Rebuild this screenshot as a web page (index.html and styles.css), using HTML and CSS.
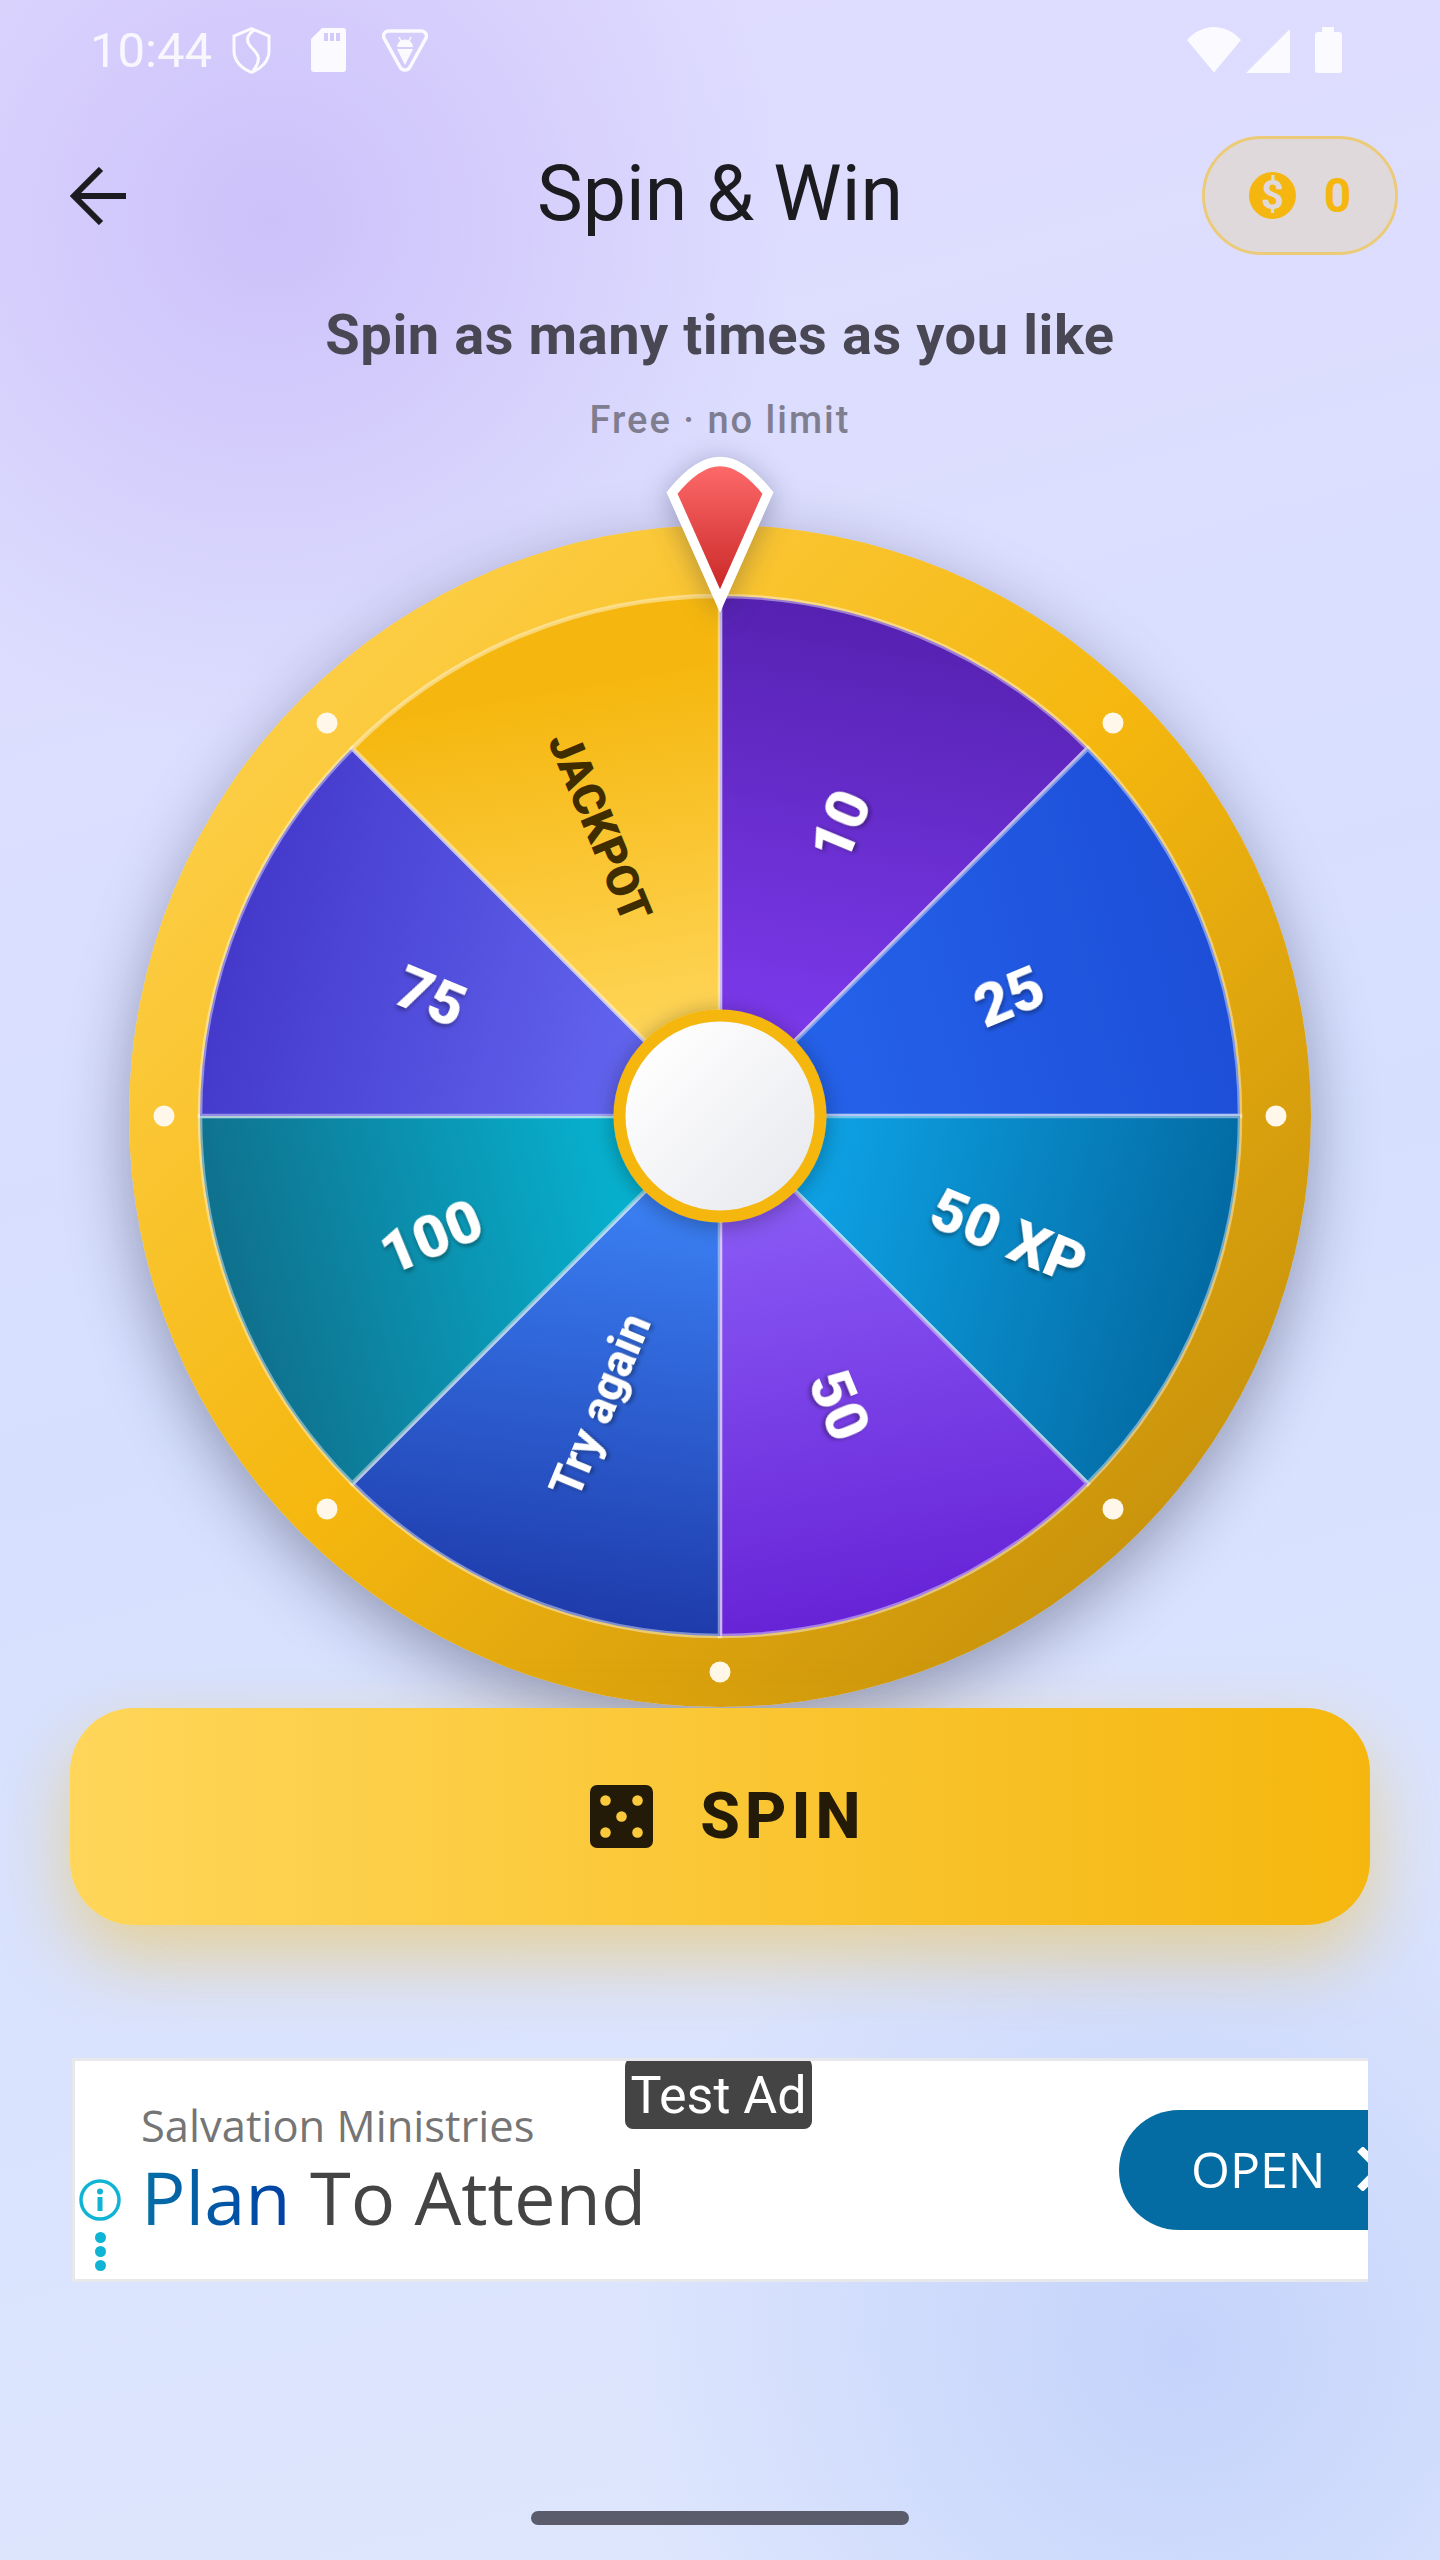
FILE: index.html
```html
<!DOCTYPE html>
<html lang="en">

<head>
  <meta charset="UTF-8">
  <meta name="viewport" content="width=device-width, initial-scale=1.0">
  <title>Spin &amp; Win</title>
  <link rel="stylesheet" href="styles.css">
</head>

<body>
  <div class="screen">

    <div class="status-bar">
      <span class="time">10:44</span>
      <svg class="icon-shield" viewBox="0 0 39 47" fill="none" stroke="currentColor" stroke-width="3">
        <path d="M19.5 1.7L37 9v15c0 10-7.500 17.500-17.500 21.300C9.500 41.500 2 34 2 24V9z" />
        <path d="M22 3c-8 6-8 11-3 17 6 6 12 11 2 24" />
      </svg>
      <svg class="icon-sd" viewBox="0 0 35 44" fill="currentColor">
        <path fill-rule="evenodd"
          d="M11 0h21a3 3 0 0 1 3 3v38a3 3 0 0 1-3 3H3a3 3 0 0 1-3-3V11zM13 5v8h4V5zm6 0v8h4V5zm6 0v8h4V5z" />
      </svg>
      <svg class="icon-tri" viewBox="0 0 46 43">
        <path d="M7 2h32c4 0 6.500 3.500 5 7L28 38c-2 4-8 4-10 0L2 9C.5 5.500 3 2 7 2z" fill="none" stroke="currentColor"
          stroke-width="3.500" />
        <path d="M15 18a8 7.500 0 0 1 16 0zM15 20h16l-8 16z" fill="currentColor" />
        <path d="M17 8l2 4M29 8l-2 4" stroke="currentColor" stroke-width="1.500" />
      </svg>

      <div class="status-right">
        <svg class="icon-wifi" viewBox="0 0 54 46" fill="currentColor">
          <path d="M0 13C7 5 17 0 27 0s20 5 27 13L27 45.500z" />
        </svg>
        <svg class="icon-signal" viewBox="0 0 44 44" fill="currentColor">
          <path d="M44 0v44H0z" />
        </svg>
        <svg class="icon-battery" viewBox="0 0 27 46" fill="currentColor">
          <path d="M7 5V0h12v5h5a3 3 0 0 1 3 3v35a3 3 0 0 1-3 3H3a3 3 0 0 1-3-3V8a3 3 0 0 1 3-3z" />
        </svg>
      </div>
    </div>

    <div class="app-bar">
      <svg class="back-arrow" viewBox="0 0 58 58" fill="none" stroke="currentColor" stroke-width="6">
        <path d="M56 29H5M31 2L4 29l27 27" />
      </svg>
      <h1 class="title">Spin &amp; Win</h1>
      <div class="coin-pill">
        <svg class="coin" viewBox="0 0 47 47">
          <circle cx="23.500" cy="23.500" r="23.500" fill="#f5b70f" />
          <text x="23.500" y="37" text-anchor="middle" class="coin-sign">$</text>
        </svg>
        <span class="coin-count">0</span>
      </div>
    </div>

    <p class="subtitle">Spin as many times as you like</p>
    <p class="note">Free · no limit</p>

    <div class="wheel">
      <svg class="wheel-svg" viewBox="0 0 1182 1182">
        <defs>
          <linearGradient id="rim" gradientUnits="userSpaceOnUse" x1="0" y1="0" x2="1182" y2="1182">
            <stop offset="0" stop-color="#ffd65a" />
            <stop offset="0.5" stop-color="#f5b70f" />
            <stop offset="1" stop-color="#b8860b" />
          </linearGradient>
          <linearGradient id="seg-10" gradientUnits="userSpaceOnUse" x1="591" y1="591" x2="680" y2="71">
            <stop offset="0.15" stop-color="#7c3aed" />
            <stop offset="1" stop-color="#5521b0" />
          </linearGradient>
          <linearGradient id="seg-25" gradientUnits="userSpaceOnUse" x1="591" y1="591" x2="1100" y2="455">
            <stop offset="0.15" stop-color="#2563eb" />
            <stop offset="1" stop-color="#1d4ed8" />
          </linearGradient>
          <linearGradient id="seg-50xp" gradientUnits="userSpaceOnUse" x1="591" y1="591" x2="1100" y2="727">
            <stop offset="0.15" stop-color="#0ea5e9" />
            <stop offset="1" stop-color="#0369a1" />
          </linearGradient>
          <linearGradient id="seg-50" gradientUnits="userSpaceOnUse" x1="591" y1="591" x2="680" y2="1111">
            <stop offset="0.15" stop-color="#8b5cf6" />
            <stop offset="1" stop-color="#6622d6" />
          </linearGradient>
          <linearGradient id="seg-try" gradientUnits="userSpaceOnUse" x1="591" y1="591" x2="520" y2="1111">
            <stop offset="0.15" stop-color="#3b82f6" />
            <stop offset="1" stop-color="#1e3aaa" />
          </linearGradient>
          <linearGradient id="seg-100" gradientUnits="userSpaceOnUse" x1="591" y1="591" x2="82" y2="727">
            <stop offset="0.15" stop-color="#06b6d4" />
            <stop offset="1" stop-color="#0f6f8c" />
          </linearGradient>
          <linearGradient id="seg-75" gradientUnits="userSpaceOnUse" x1="591" y1="591" x2="82" y2="455">
            <stop offset="0.15" stop-color="#6366f1" />
            <stop offset="1" stop-color="#4338ca" />
          </linearGradient>
          <linearGradient id="seg-jackpot" gradientUnits="userSpaceOnUse" x1="591" y1="591" x2="500" y2="71">
            <stop offset="0.15" stop-color="#ffd65a" />
            <stop offset="0.85" stop-color="#f5b70f" />
          </linearGradient>
          <linearGradient id="hub" x1="0" y1="0" x2="1" y2="1">
            <stop offset="0.1" stop-color="#ffffff" />
            <stop offset="0.9" stop-color="#e9eaef" />
          </linearGradient>
          <filter id="hub-shadow" x="-30%" y="-30%" width="160%" height="160%">
            <feDropShadow dx="0" dy="3" stdDeviation="11" flood-color="#000" flood-opacity="0.32" />
          </filter>
        </defs>

        <circle cx="591" cy="591" r="591" fill="url(#rim)" />

        <g class="rim-dots">
          <circle cx="984" cy="198" r="10.500" />
          <circle cx="1147" cy="591" r="10.500" />
          <circle cx="984" cy="984" r="10.500" />
          <circle cx="591" cy="1147" r="10.500" />
          <circle cx="198" cy="984" r="10.500" />
          <circle cx="35" cy="591" r="10.500" />
          <circle cx="198" cy="198" r="10.500" />
        </g>

        <g class="segments">
          <path fill="url(#seg-10)" d="M591 591V71A520 520 0 0 1 958.700 223.300z" />
          <path fill="url(#seg-25)" d="M591 591L958.700 223.300A520 520 0 0 1 1111 591z" />
          <path fill="url(#seg-50xp)" d="M591 591H1111A520 520 0 0 1 958.700 958.700z" />
          <path fill="url(#seg-50)" d="M591 591L958.700 958.700A520 520 0 0 1 591 1111z" />
          <path fill="url(#seg-try)" d="M591 591V1111A520 520 0 0 1 223.300 958.700z" />
          <path fill="url(#seg-100)" d="M591 591L223.300 958.700A520 520 0 0 1 71 591z" />
          <path fill="url(#seg-75)" d="M591 591H71A520 520 0 0 1 223.300 223.300z" />
          <path fill="url(#seg-jackpot)" d="M591 591L223.300 223.300A520 520 0 0 1 591 71z" />
        </g>

        <text class="label" transform="translate(711 300) rotate(-67.500)">10</text>
        <text class="label" transform="translate(880 471) rotate(-22.500)">25</text>
        <text class="label" transform="translate(880 711) rotate(22.500)">50 XP</text>
        <text class="label" transform="translate(711 880) rotate(67.500)">50</text>
        <text class="label label-small" transform="translate(471 880) rotate(-67.500)">Try again</text>
        <text class="label" transform="translate(302 711) rotate(-22.500)">100</text>
        <text class="label" transform="translate(302 471) rotate(22.500)">75</text>
        <text class="label-jackpot" transform="translate(471 302) rotate(67.500)">JACKPOT</text>

        <circle cx="591" cy="591" r="106.500" fill="#f5b70f" filter="url(#hub-shadow)" />
        <circle cx="591" cy="591" r="94.500" fill="url(#hub)" />
      </svg>

      <svg class="pointer" viewBox="0 0 140 190">
        <defs>
          <linearGradient id="pointer-red" x1="0" y1="0" x2="0" y2="1">
            <stop offset="0" stop-color="#ff6b6b" />
            <stop offset="1" stop-color="#c62222" />
          </linearGradient>
        </defs>
        <path d="M70 161L22 53C38 33 54 21.500 70 21.500S102 33 118 53z" fill="url(#pointer-red)" stroke="#fff"
          stroke-width="9.500" />
      </svg>
    </div>

    <button class="spin-button">
      <svg class="dice" viewBox="0 0 63 63">
        <rect width="63" height="63" rx="7" fill="#231b08" />
        <g fill="#fdc93c">
          <circle cx="15.500" cy="15.500" r="5.300" />
          <circle cx="47.500" cy="15.500" r="5.300" />
          <circle cx="31.500" cy="31.500" r="5.300" />
          <circle cx="15.500" cy="47.500" r="5.300" />
          <circle cx="47.500" cy="47.500" r="5.300" />
        </g>
      </svg>
      <span>SPIN</span>
    </button>

    <div class="ad">
      <div class="ad-tag">Test Ad</div>
      <div class="ad-info">
        <svg class="ad-info-icon" viewBox="0 0 42 42">
          <circle cx="21" cy="21" r="19" fill="none" stroke="#0fb3d3" stroke-width="3.500" />
          <circle cx="21" cy="12.500" r="3" fill="#0fb3d3" />
          <rect x="18.500" y="18" width="5" height="14" fill="#0fb3d3" />
        </svg>
        <div class="ad-dots">
          <span></span>
          <span></span>
          <span></span>
        </div>
      </div>
      <div class="ad-text">
        <div class="ad-brand">Salvation Ministries</div>
        <div class="ad-headline"><span class="ad-plan">Plan</span> To Attend</div>
      </div>
      <div class="ad-open">
        <span>OPEN</span>
        <svg class="ad-chevron" viewBox="0 0 30 44" fill="none" stroke="#fff" stroke-width="8">
          <path d="M3 2l20 20L3 42" />
        </svg>
      </div>
    </div>

    <div class="home-bar"></div>
  </div>
</body>

</html>
```

FILE: styles.css
```css
body {
  margin: 0;
  font-family: Roboto, sans-serif;
}

h1,
p {
  margin: 0;
}

.screen {
  width: 1440px;
  height: 2560px;
  overflow: hidden;
  display: flex;
  flex-direction: column;
  align-items: center;
  background:
    radial-gradient(circle 520px at 270px 220px, #cdc1fa 0%, rgba(205, 193, 250, 0) 100%),
    radial-gradient(circle 560px at 1180px 2350px, #c4d3fb 0%, rgba(196, 211, 251, 0) 100%),
    linear-gradient(165deg, #e0dbff 0%, #dcdefe 25%, #d6e0fe 50%, #dfe7fd 100%);
}

/* status bar */
.status-bar {
  box-sizing: border-box;
  width: 100%;
  height: 100px;
  padding: 0 98px 0 90px;
  display: flex;
  align-items: center;
  color: #fbfaff;
}

.time {
  font-size: 49px;
  width: 122px;
  opacity: 0.95;
}

.icon-shield {
  width: 39px;
  height: 47px;
  margin-left: 20px;
}

.icon-sd {
  width: 35px;
  height: 44px;
  margin-left: 40px;
}

.icon-tri {
  width: 46px;
  height: 43px;
  margin-left: 36px;
}

.status-right {
  margin-left: auto;
  display: flex;
  align-items: flex-end;
}

.icon-wifi {
  width: 54px;
  height: 46px;
}

.icon-signal {
  width: 44px;
  height: 44px;
  margin-left: 5px;
}

.icon-battery {
  width: 27px;
  height: 46px;
  margin-left: 25px;
}

/* app bar */
.app-bar {
  box-sizing: border-box;
  width: 100%;
  margin-top: 36px;
  padding: 0 42px;
  display: grid;
  grid-template-columns: 1fr auto 1fr;
  align-items: center;
}

.back-arrow {
  width: 58px;
  height: 58px;
  margin-left: 28px;
  color: #1c1b1f;
}

.title {
  padding-bottom: 3px;
  font-size: 77px;
  font-weight: 400;
  line-height: 90px;
  color: #1c1b1f;
}

.coin-pill {
  box-sizing: border-box;
  justify-self: end;
  width: 196px;
  height: 119px;
  display: flex;
  align-items: center;
  justify-content: center;
  gap: 28px;
  background: #e0d9dc;
  border: 3.5px solid #eccb78;
  border-radius: 60px;
}

.coin {
  width: 47px;
  height: 47px;
}

.coin-sign {
  font-size: 40px;
  font-weight: 700;
  fill: #e0d9dc;
}

.coin-count {
  font-size: 48px;
  font-weight: 700;
  color: #f5b70f;
}

.subtitle {
  margin-top: 48px;
  font-size: 56px;
  font-weight: 700;
  line-height: 64px;
  letter-spacing: 0.560px;
  color: #4a4754;
}

.note {
  margin-top: 31px;
  font-size: 38px;
  font-weight: 500;
  line-height: 44px;
  letter-spacing: 2px;
  color: #7f7d90;
}

/* wheel */
.wheel {
  position: relative;
  width: 1182px;
  height: 1182px;
  margin-top: 83px;
  border-radius: 50%;
  box-shadow: 0 20px 64px rgba(20, 20, 50, 0.36);
}

.wheel-svg {
  display: block;
  width: 100%;
  height: 100%;
}

.rim-dots {
  fill: #fff8ea;
}

.segments path {
  stroke: rgba(255, 255, 255, 0.42);
  stroke-width: 4.500px;
}

.label,
.label-jackpot {
  font-family: Roboto, sans-serif;
  font-weight: 900;
  text-anchor: middle;
  dominant-baseline: central;
}

.label {
  font-size: 60px;
  fill: #fff;
  filter: drop-shadow(0 3px 2px rgba(0, 0, 0, 0.35));
}

.label-small {
  font-size: 46px;
  font-weight: 800;
}

.label-jackpot {
  font-size: 45px;
  fill: #3f2d00;
}

.pointer {
  position: absolute;
  top: -85px;
  left: 521px;
  width: 140px;
  height: 190px;
  filter: drop-shadow(0 4px 14px rgba(30, 30, 70, 0.32));
}

/* spin button */
.spin-button {
  position: relative;
  z-index: 1;
  width: 1300px;
  height: 217px;
  margin-top: 1px;
  padding: 0 0 0 16px;
  border: none;
  border-radius: 64px;
  display: flex;
  align-items: center;
  justify-content: center;
  gap: 47px;
  background: linear-gradient(90deg, #ffd65a, #f5b70f);
  box-shadow: 0 32px 72px rgba(245, 183, 15, 0.42);
  font-family: Roboto, sans-serif;
  font-size: 64px;
  font-weight: 800;
  letter-spacing: 5px;
  color: #231b08;
}

.dice {
  width: 63px;
  height: 63px;
}

/* ad banner */
.ad {
  box-sizing: border-box;
  position: relative;
  width: 1296px;
  height: 224px;
  margin-top: 133px;
  border: 3px solid #e6e8ec;
  border-right: none;
  overflow: hidden;
  display: flex;
  background: #fff;
  font-family: "Open Sans", sans-serif;
}

.ad-tag {
  box-sizing: border-box;
  position: absolute;
  top: -3px;
  left: 550px;
  width: 187px;
  height: 71px;
  padding-top: 4px;
  display: flex;
  align-items: center;
  justify-content: center;
  border-radius: 8px;
  background: #444;
  font-family: Roboto, sans-serif;
  font-size: 52px;
  color: #fff;
}

.ad-info {
  width: 50px;
  padding-top: 118px;
  display: flex;
  flex-direction: column;
  align-items: center;
}

.ad-info-icon {
  width: 42px;
  height: 42px;
}

.ad-dots {
  margin-top: 11px;
  display: flex;
  flex-direction: column;
  gap: 3px;
}

.ad-dots span {
  width: 11px;
  height: 11px;
  border-radius: 50%;
  background: #0fb3d3;
}

.ad-text {
  margin-left: 16px;
  padding-top: 41px;
}

.ad-brand {
  font-size: 43.500px;
  line-height: 48px;
  color: #757575;
}

.ad-headline {
  margin-top: 5px;
  font-size: 74px;
  line-height: 84px;
  color: #444;
}

.ad-plan {
  background: linear-gradient(90deg, #056fa6, #0040a5);
  -webkit-background-clip: text;
  background-clip: text;
  color: transparent;
}

.ad-open {
  box-sizing: border-box;
  width: 249px;
  height: 120px;
  margin: 49px 0 0 auto;
  padding: 0 0 2px 72px;
  display: flex;
  align-items: center;
  overflow: hidden;
  border-radius: 60px 0 0 60px;
  background: #046ca3;
  font-size: 50px;
  color: #fff;
}

.ad-chevron {
  flex: none;
  width: 30px;
  height: 44px;
  margin-left: 32px;
}

.home-bar {
  width: 378px;
  height: 14px;
  margin-top: 229px;
  border-radius: 7px;
  background: #5a5c6b;
}
```
